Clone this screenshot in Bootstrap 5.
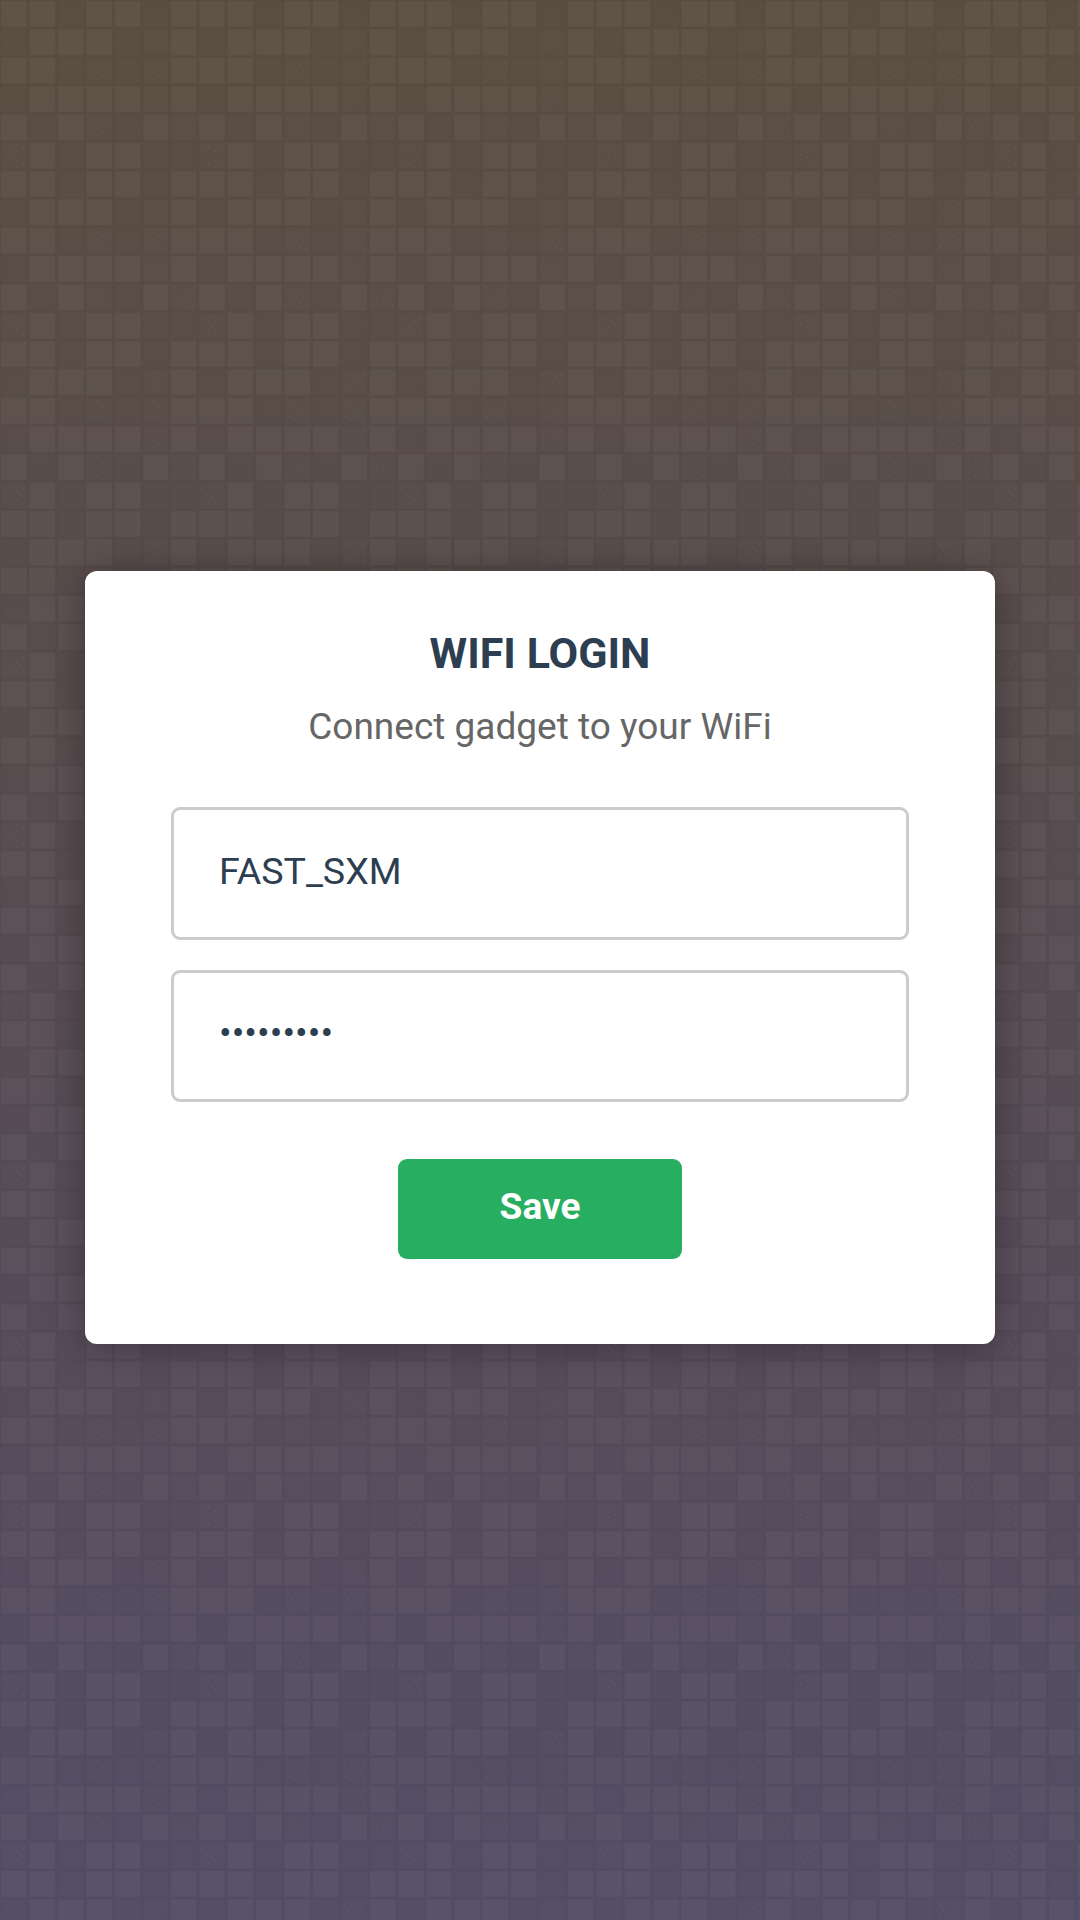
<!DOCTYPE html>
<html lang="en">
<head>
<meta charset="utf-8">
<title>WiFi Login</title>
<link href="https://cdn.jsdelivr.net/npm/bootstrap@5.3.0/dist/css/bootstrap.min.css" rel="stylesheet">
<style>
html,body{height:100%}
body{
  font-family:Roboto,"Liberation Sans",sans-serif;
  background-color:#574e55;
  background-image:var(--tiles),linear-gradient(180deg,#594c3f 0%,#574b48 25%,#554a50 50%,#534a5a 75%,#524c64 100%);
  background-size:198.33px 170px,100% 100%;
  background-position:0 0,0 0;
}
.login-wrap{min-height:1920px;padding-bottom:5px}
.login-panel{width:910px;height:773px;padding:58px 86px 0;border:0;border-radius:12px;background:#fff;box-shadow:0 3px 36px rgba(0,0,0,.32)}
.login-title{font-size:43px;line-height:48px;font-weight:700;color:#2c3e50;margin:0 0 29px}
.login-sub{font-size:37px;line-height:42px;color:#666;margin:0 0 59px}
.login-field{height:133px;border:3px solid #ccc;border-radius:9px;padding:0 45px 6px;font-size:37.6px;line-height:42px;color:#2c3e50;margin-bottom:30px;box-shadow:none}
.login-field.last{margin-bottom:57px;height:132px}
.login-save{width:284px;height:100px;border:0;border-radius:9px;background:#27ae60;color:#fff;font-size:37px;font-weight:700;padding:0 0 4px}
</style>
<style id="t">
body{--tiles:url("data:image/svg+xml,%3Csvg xmlns='http://www.w3.org/2000/svg' width='198.33' height='170' viewBox='0 0 198.33 170'%3E%3Cdefs%3E%3Cfilter id='b' x='-5%25' y='-5%25' width='110%25' height='110%25'%3E%3CfeGaussianBlur stdDeviation='.75'/%3E%3C/filter%3E%3Cg id='L'%3E%3Crect width='25.6' height='25.6' fill='%23fff' fill-opacity='.04'/%3E%3C/g%3E%3Cg id='D'%3E%3Crect width='25.6' height='25.6' fill='%23fff' fill-opacity='.012'/%3E%3C/g%3E%3Cg id='N'%3E%3Crect width='25.6' height='25.6' fill='%23fff' fill-opacity='.015'/%3E%3Cpath d='M3 5h2v2H3zM9 3h2v2H9zM15 7h2v2h-2zM21 4h2v2h-2zM6 11h2v2H6zM12 13h2v2h-2zM18 11h2v2h-2zM3 18h2v2H3zM9 20h2v2H9zM15 17h2v2h-2zM21 20h2v2h-2z' fill='%23fff' fill-opacity='.04'/%3E%3C/g%3E%3C/defs%3E%3Cg filter='url(%23b)'%3E%3Cuse href='%23L' x='1.2' y='1.2'/%3E%3Cuse href='%23L' x='29.5' y='1.2'/%3E%3Cuse href='%23D' x='57.9' y='1.2'/%3E%3Cuse href='%23L' x='86.2' y='1.2'/%3E%3Cuse href='%23L' x='114.5' y='1.2'/%3E%3Cuse href='%23D' x='142.9' y='1.2'/%3E%3Cuse href='%23L' x='171.2' y='1.2'/%3E%3Cuse href='%23D' x='1.2' y='29.5'/%3E%3Cuse href='%23L' x='29.5' y='29.5'/%3E%3Cuse href='%23L' x='57.9' y='29.5'/%3E%3Cuse href='%23L' x='86.2' y='29.5'/%3E%3Cuse href='%23D' x='114.5' y='29.5'/%3E%3Cuse href='%23N' x='142.9' y='29.5'/%3E%3Cuse href='%23L' x='171.2' y='29.5'/%3E%3Cuse href='%23L' x='1.2' y='57.9'/%3E%3Cuse href='%23L' x='29.5' y='57.9'/%3E%3Cuse href='%23D' x='57.9' y='57.9'/%3E%3Cuse href='%23N' x='86.2' y='57.9'/%3E%3Cuse href='%23D' x='114.5' y='57.9'/%3E%3Cuse href='%23N' x='142.9' y='57.9'/%3E%3Cuse href='%23L' x='171.2' y='57.9'/%3E%3Cuse href='%23D' x='1.2' y='86.2'/%3E%3Cuse href='%23L' x='29.5' y='86.2'/%3E%3Cuse href='%23L' x='57.9' y='86.2'/%3E%3Cuse href='%23L' x='86.2' y='86.2'/%3E%3Cuse href='%23L' x='114.5' y='86.2'/%3E%3Cuse href='%23N' x='142.9' y='86.2'/%3E%3Cuse href='%23L' x='171.2' y='86.2'/%3E%3Cuse href='%23L' x='1.2' y='114.5'/%3E%3Cuse href='%23D' x='29.5' y='114.5'/%3E%3Cuse href='%23L' x='57.9' y='114.5'/%3E%3Cuse href='%23N' x='86.2' y='114.5'/%3E%3Cuse href='%23D' x='114.5' y='114.5'/%3E%3Cuse href='%23L' x='142.9' y='114.5'/%3E%3Cuse href='%23N' x='171.2' y='114.5'/%3E%3Cuse href='%23N' x='1.2' y='142.9'/%3E%3Cuse href='%23L' x='29.5' y='142.9'/%3E%3Cuse href='%23D' x='57.9' y='142.9'/%3E%3Cuse href='%23L' x='86.2' y='142.9'/%3E%3Cuse href='%23L' x='114.5' y='142.9'/%3E%3Cuse href='%23D' x='142.9' y='142.9'/%3E%3Cuse href='%23D' x='171.2' y='142.9'/%3E%3C/g%3E%3C/svg%3E")}
</style>
</head>
<body>
<main class="login-wrap d-flex align-items-center justify-content-center">
  <div class="card login-panel text-center">
    <h1 class="login-title">WIFI LOGIN</h1>
    <p class="login-sub">Connect gadget to your WiFi</p>
    <form class="d-flex flex-column align-items-center">
      <input class="form-control login-field" type="text" value="FAST_SXM" aria-label="Network name">
      <input class="form-control login-field last" type="password" value="123456789" aria-label="Password">
      <button class="btn login-save" type="button">Save</button>
    </form>
  </div>
</main>
<script src="https://cdn.jsdelivr.net/npm/bootstrap@5.3.0/dist/js/bootstrap.bundle.min.js"></script>
</body>
</html>
